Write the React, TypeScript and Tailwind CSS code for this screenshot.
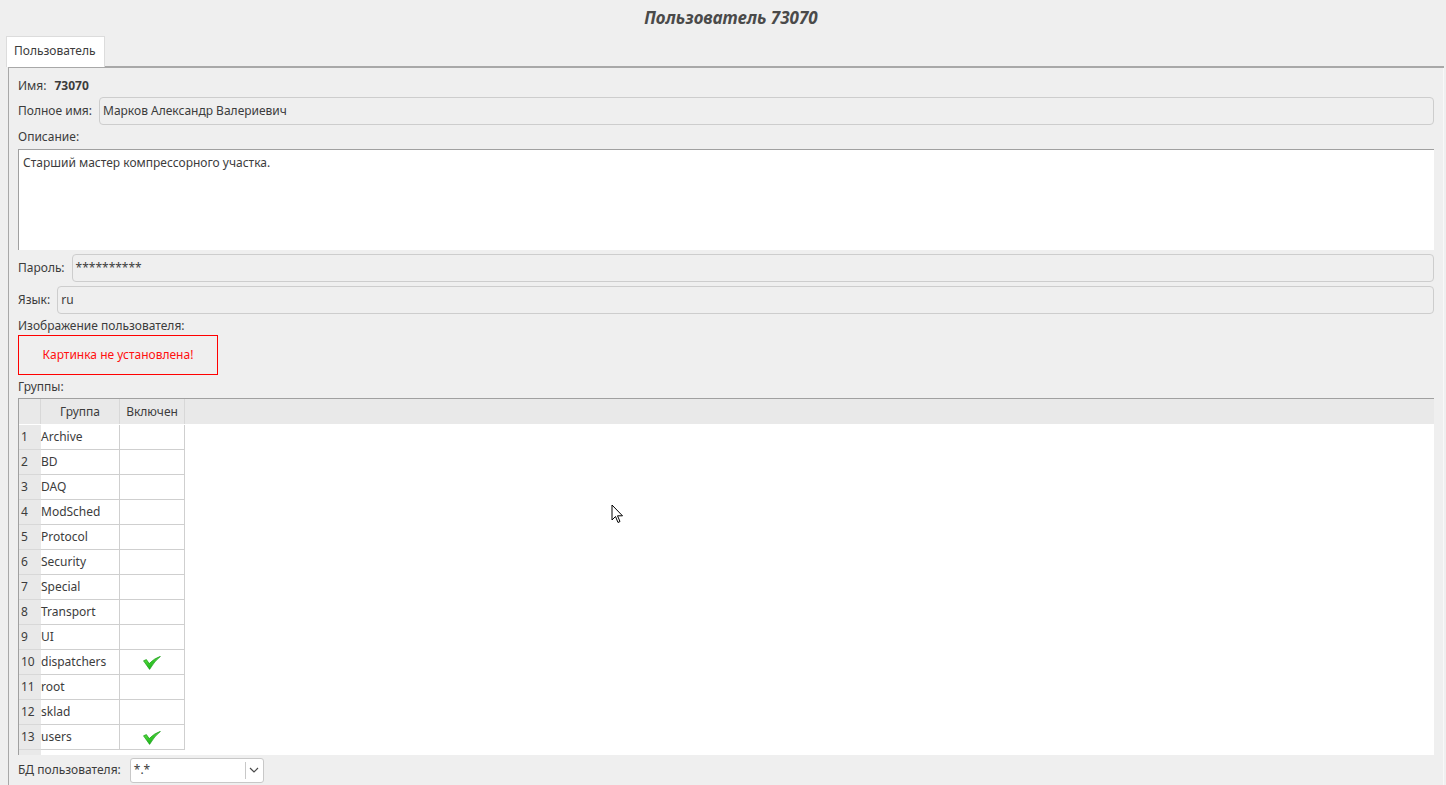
import React from "react";

const groups: { name: string; on: boolean }[] = [
  { name: "Archive", on: false },
  { name: "BD", on: false },
  { name: "DAQ", on: false },
  { name: "ModSched", on: false },
  { name: "Protocol", on: false },
  { name: "Security", on: false },
  { name: "Special", on: false },
  { name: "Transport", on: false },
  { name: "UI", on: false },
  { name: "dispatchers", on: true },
  { name: "root", on: false },
  { name: "sklad", on: false },
  { name: "users", on: true },
];

const Check = () => (
  <svg width={18} height={14} viewBox="0 0 18 14" className="mt-[1px]">
    <defs>
      <linearGradient id="chk" x1="0" y1="0" x2="0.6" y2="1">
        <stop offset="0" stopColor="#6be84a" />
        <stop offset="1" stopColor="#0fae12" />
      </linearGradient>
    </defs>
    <path
      d="M0.5 4.8 L3.4 3.6 L6.2 7.6 Q11 2.5 17.5 0.3 Q11.5 5 6.6 13.4 Z"
      fill="url(#chk)"
      stroke="#169b16"
      strokeWidth="0.7"
      strokeLinejoin="round"
    />
  </svg>
);

const Field = ({ label, value }: { label: string; value: string }) => (
  <div className="flex items-center h-[28px] mb-[4px]">
    <span className="pr-[7px]">{label}</span>
    <div className="flex-1 h-[28px] flex items-center px-[3px] border border-[#cdcdcd] rounded-[4px] bg-[#efefef]">
      {value}
    </div>
  </div>
);

export default function App() {
  return (
    <div className="relative w-[1446px] h-[785px] overflow-hidden bg-[#efefef] font-['Noto_Sans',sans-serif] text-[12px] text-[#3c3c3c]">
      <div className="h-[36px] flex items-center justify-center pl-[16px] text-[17px] font-bold italic text-[#4a4a4a]">
        Пользователь 73070
      </div>
      <div className="flex pl-[6px] h-[30px]">
        <div className="w-[99px] h-[31px] bg-white border border-b-0 border-[#dcdcdc] flex items-center pl-[7px] pb-[2px] relative z-10">
          Пользователь
        </div>
      </div>
      <div className="ml-[8px] w-[1436px] h-[719px] border-t-2 border-l border-[#a8a8a8] flex">
        <div className="w-[1425px] pl-[9px] pt-[6px] flex flex-col">
          <div className="flex items-center h-[24px]">
            <span>Имя:</span>
            <span className="ml-[8px] font-bold">73070</span>
          </div>
          <div className="flex items-center h-[28px] -mt-[1px]">
            <span className="pr-[7px]">Полное имя:</span>
            <div className="flex-1 h-[28px] flex items-center px-[3px] border border-[#cdcdcd] rounded-[4px]">
              Марков Александр Валериевич
            </div>
          </div>
          <div className="h-[24px] flex items-center">Описание:</div>
          <div className="h-[101px] bg-white border-t border-l border-[#a0a0a0] px-[4px] pt-[4px] mb-[4px]">
            Старший мастер компрессорного участка.
          </div>
          <Field label="Пароль:" value="**********" />
          <Field label="Язык:" value="ru" />
          <div className="h-[21px] flex items-center -mt-[4px] pt-[3px]">Изображение пользователя:</div>
          <div className="w-[200px] h-[40px] border border-[#ff0000] flex items-center justify-center text-[#ff1010]">
            Картинка не установлена!
          </div>
          <div className="h-[23px] flex items-center">Группы:</div>
          <div className="h-[357px] border-t border-l border-[#a0a0a0] bg-white flex flex-col">
            <div className="flex h-[26px] bg-[#e9e9e9] border-b border-white">
              <div className="w-[22px] border-r border-[#d8d8d8]" />
              <div className="w-[79px] border-r border-[#d8d8d8] flex items-center justify-center">Группа</div>
              <div className="w-[65px] border-r border-[#d8d8d8] flex items-center justify-center">Включен</div>
            </div>
            {groups.map((g, i) => (
              <div key={g.name} className="flex h-[25px]">
                <div className="w-[22px] bg-[#e9e9e9] border-b border-[#d8d8d8] flex items-center pl-[2px]">
                  {i + 1}
                </div>
                <div className="w-[79px] border-r border-b border-[#cfcfcf] flex items-center">{g.name}</div>
                <div className="w-[65px] border-r border-b border-[#cfcfcf] flex items-center justify-center">
                  {g.on && <Check />}
                </div>
              </div>
            ))}
            <div className="w-[22px] flex-1 bg-[#e9e9e9]" />
          </div>
          <div className="flex items-center h-[30px]">
            <span className="pr-[9px]">БД пользователя:</span>
            <div className="w-[134px] h-[25px] bg-white border border-[#c8c8c8] rounded-[3px] flex items-center">
              <span className="flex-1 pl-[3px]">*.*</span>
              <div className="w-[18px] h-[17px] border-l border-[#c8c8c8] flex items-center justify-center">
                <svg width={10} height={6} viewBox="0 0 10 6">
                  <path d="M1 1 L5 5 L9 1" fill="none" stroke="#4a4a4a" strokeWidth="1.2" />
                </svg>
              </div>
            </div>
          </div>
        </div>
        <div className="w-[9px]" />
        <div className="w-[1px] bg-[#f8f8f8]" />
      </div>
      <svg className="absolute left-[611px] top-[504px]" width={13} height={20} viewBox="0 0 13 20">
        <path d="M1 1 L1 16 L4.5 12.5 L7 18.5 L9 17.5 L6.5 11.8 L11.5 11.8 Z" fill="#fff" stroke="#000" strokeWidth="1" strokeLinejoin="round" />
      </svg>
    </div>
  );
}
